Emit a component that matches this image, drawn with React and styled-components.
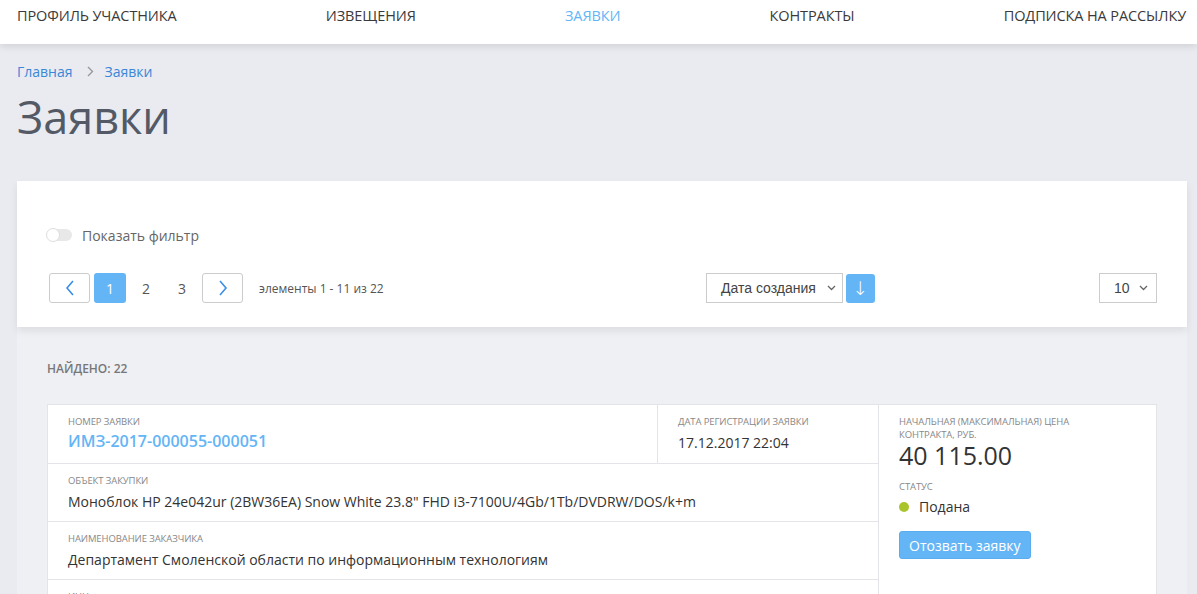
import styled, { createGlobalStyle } from 'styled-components';

const GlobalStyle = createGlobalStyle`
	body {
		margin: 0;
		background: #e9ebf0;
		font-family: 'Open Sans', 'Liberation Sans', sans-serif;
		color: #333;
	}
	* { box-sizing: border-box; }
`;

const navItems = ['Профиль участника', 'Извещения', 'Заявки', 'Контракты', 'Подписка на рассылку'];

function Chevron({ dir }) {
	return (
		<svg width='10' height='16' viewBox='0 0 10 16'>
			<path
				d={dir === 'left' ? 'M8 1 L2 8 L8 15' : 'M2 1 L8 8 L2 15'}
				fill='none'
				stroke='#3a8ee6'
				strokeWidth='1.6'
			/>
		</svg>
	);
}

function Caret() {
	return (
		<svg width='9' height='6' viewBox='0 0 9 6'>
			<path d='M1 1 L4.5 4.5 L8 1' fill='none' stroke='#666' strokeWidth='1.3' />
		</svg>
	);
}

export default function App() {
	return (
		<>
			<GlobalStyle />
			<Header>
				{navItems.map((n) => (
					<NavItem key={n} active={n === 'Заявки'}>
						{n}
					</NavItem>
				))}
			</Header>
			<Page>
				<Breadcrumbs>
					<Crumb>Главная</Crumb>
					<Sep>
						<svg width='7' height='11' viewBox='0 0 7 11'>
							<path d='M1 1 L5.5 5.5 L1 10' fill='none' stroke='#999' strokeWidth='1.4' />
						</svg>
					</Sep>
					<Crumb>Заявки</Crumb>
				</Breadcrumbs>
				<Title>Заявки</Title>

				<FilterPanel>
					<ToggleRow>
						<Toggle>
							<Knob />
						</Toggle>
						<ToggleLabel>Показать фильтр</ToggleLabel>
					</ToggleRow>
					<Controls>
						<Pager>
							<ArrowBtn>
								<Chevron dir='left' />
							</ArrowBtn>
							<PageBtn active>1</PageBtn>
							<PageBtn>2</PageBtn>
							<PageBtn>3</PageBtn>
							<ArrowBtn>
								<Chevron dir='right' />
							</ArrowBtn>
							<Range>элементы 1 - 11 из 22</Range>
						</Pager>
						<SortGroup>
							<Select width='137px'>
								<span>Дата создания</span>
								<Caret />
							</Select>
							<SortBtn>↓</SortBtn>
						</SortGroup>
						<Select width='58px' small>
							<span>10</span>
							<Caret />
						</Select>
					</Controls>
				</FilterPanel>

				<Results>
					<Found>Найдено: 22</Found>
					<Card>
						<MainCol>
							<Row>
								<Cell>
									<Label>Номер заявки</Label>
									<LinkValue>ИМЗ-2017-000055-000051</LinkValue>
								</Cell>
								<Cell side>
									<Label>Дата регистрации заявки</Label>
									<Value>17.12.2017 22:04</Value>
								</Cell>
							</Row>
							<Row>
								<Cell>
									<Label>Объект закупки</Label>
									<Value>
										Моноблок HP 24e042ur (2BW36EA) Snow White 23.8" FHD i3-7100U/4Gb/1Tb/DVDRW/DOS/k+m
									</Value>
								</Cell>
							</Row>
							<Row>
								<Cell>
									<Label>Наименование заказчика</Label>
									<Value>Департамент Смоленской области по информационным технологиям</Value>
								</Cell>
							</Row>
							<Row>
								<Cell>
									<Label>ИНН</Label>
									<Value>6730054955</Value>
								</Cell>
							</Row>
						</MainCol>
						<SideCol>
							<Label>Начальная (максимальная) цена контракта, руб.</Label>
							<Price>40 115.00</Price>
							<Label>Статус</Label>
							<Status>
								<Dot />
								Подана
							</Status>
							<WithdrawBtn>Отозвать заявку</WithdrawBtn>
						</SideCol>
					</Card>
				</Results>
			</Page>
		</>
	);
}

// ########## styled components ##########
const Header = styled.header`
	height: 44px;
	background: #fff;
	box-shadow: 0 2px 8px rgba(0, 0, 0, 0.12);
	display: flex;
	justify-content: space-between;
	align-items: center;
	padding: 0 11px 13px 17px;
	position: relative;
	z-index: 1;
`;

const NavItem = styled.a`
	font-size: 14.5px;
	text-transform: uppercase;
	color: ${(p) => (p.active ? '#64b5f6' : '#3a3a3a')};
	letter-spacing: -0.1px;
	cursor: pointer;
`;

const Page = styled.main`
	padding: 0 10px 0 17px;
`;

const Breadcrumbs = styled.nav`
	display: flex;
	align-items: center;
	padding-top: 17px;
	height: 37px;
	font-size: 14px;
`;

const Crumb = styled.a`
	color: #3a86d8;
`;

const Sep = styled.span`
	display: flex;
	margin: 0 11px 0 14px;
`;

const Title = styled.h1`
	margin: 7px 0 0;
	font-size: 45px;
	font-weight: 400;
	color: #535965;
	line-height: 58px;
	height: 93px;
`;

const FilterPanel = styled.section`
	background: #fff;
	padding: 45px 30px 24px;
	box-shadow: 0 4px 8px rgba(0, 0, 0, 0.08);
	position: relative;
`;

const ToggleRow = styled.div`
	display: flex;
	align-items: center;
	gap: 10px;
	height: 18px;
`;

const Toggle = styled.span`
	width: 25px;
	height: 12px;
	border-radius: 6px;
	background: #e8e8e8;
	position: relative;
`;

const Knob = styled.span`
	position: absolute;
	left: -1px;
	top: -1px;
	width: 14px;
	height: 14px;
	border-radius: 50%;
	background: #fff;
	border: 1px solid #ddd;
`;

const ToggleLabel = styled.span`
	font-size: 14px;
	color: #666;
`;

const Controls = styled.div`
	margin-top: 29px;
	display: flex;
	align-items: center;
	padding: 0 0 0 2px;
`;

const Pager = styled.div`
	display: flex;
	align-items: center;
	gap: 4px;
	flex: 1;
`;

const ArrowBtn = styled.button`
	width: 41px;
	height: 30px;
	border: 1px solid #ccc;
	border-radius: 3px;
	background: #fff;
	display: flex;
	align-items: center;
	justify-content: center;
	padding: 0;
`;

const PageBtn = styled.button`
	width: 32px;
	height: 30px;
	border: none;
	border-radius: 3px;
	background: ${(p) => (p.active ? '#64b5f6' : 'transparent')};
	color: ${(p) => (p.active ? '#fff' : '#555')};
	font-family: inherit;
	font-size: 14px;
	padding: 0;
`;

const Range = styled.span`
	margin-left: 12px;
	font-size: 12px;
	color: #555;
`;

const SortGroup = styled.div`
	display: flex;
	align-items: center;
	gap: 3px;
	margin-right: 224px;
`;

const Select = styled.div`
	width: ${(p) => p.width};
	height: 30px;
	border: 1px solid #ccc;
	background: #fff;
	display: flex;
	align-items: center;
	justify-content: space-between;
	padding: ${(p) => (p.small ? '0 8px 0 14px' : '0 6px 0 14px')};
	font-family: 'Liberation Sans', Arial, sans-serif;
	font-size: 14px;
	color: #444;
`;

const SortBtn = styled.button`
	width: 29px;
	height: 29px;
	border: none;
	border-radius: 3px;
	background: #64b5f6;
	color: #fff;
	font-size: 19px;
	line-height: 1;
	padding: 0;
	font-family: 'DejaVu Sans', sans-serif;
	font-weight: 300;
`;

const Results = styled.section`
	background: #eff0f4;
	padding: 33px 30px 40px;
	min-height: 300px;
`;

const Found = styled.div`
	font-size: 12px;
	font-weight: 600;
	color: #777;
	text-transform: uppercase;
	height: 44px;
`;

const Card = styled.div`
	display: flex;
	background: #fff;
	border: 1px solid #e3e4e8;
`;

const MainCol = styled.div`
	flex: 1;
	border-right: 1px solid #e3e4e8;
`;

const Row = styled.div`
	display: flex;
	border-bottom: 1px solid #e3e4e8;
	height: 58px;
	&:first-child {
		height: 59px;
	}
`;

const Cell = styled.div`
	padding: 10px 20px;
	${(p) => (p.side ? 'width: 221px; border-left: 1px solid #e3e4e8;' : 'flex: 1;')}
`;

const Label = styled.div`
	font-size: 9.5px;
	text-transform: uppercase;
	color: #888;
	line-height: 13px;
	letter-spacing: -0.1px;
`;

const Value = styled.div`
	margin-top: 5px;
	font-size: 14px;
	color: #333;
	white-space: nowrap;
`;

const LinkValue = styled.a`
	display: block;
	margin-top: 2px;
	font-size: 16px;
	font-weight: 600;
	color: #64b5f6;
`;

const SideCol = styled.div`
	width: 277px;
	padding: 10px 20px 20px;
	display: flex;
	flex-direction: column;
	align-items: flex-start;
	& > ${Label} {
		padding-right: 20px;
	}
`;

const Price = styled.div`
	font-size: 25px;
	color: #333;
	line-height: 30px;
	margin: -1px 0 10px;
`;

const Status = styled.div`
	display: flex;
	align-items: center;
	gap: 10px;
	font-size: 14px;
	color: #333;
	margin-top: 4px;
`;

const Dot = styled.span`
	width: 10px;
	height: 10px;
	border-radius: 50%;
	background: #a9c52b;
`;

const WithdrawBtn = styled.button`
	margin-top: 15px;
	height: 28px;
	padding: 0 9px;
	border: 1px solid #5aaef0;
	border-radius: 3px;
	background: #64b5f6;
	color: #fff;
	font-family: inherit;
	font-size: 14px;
`;
